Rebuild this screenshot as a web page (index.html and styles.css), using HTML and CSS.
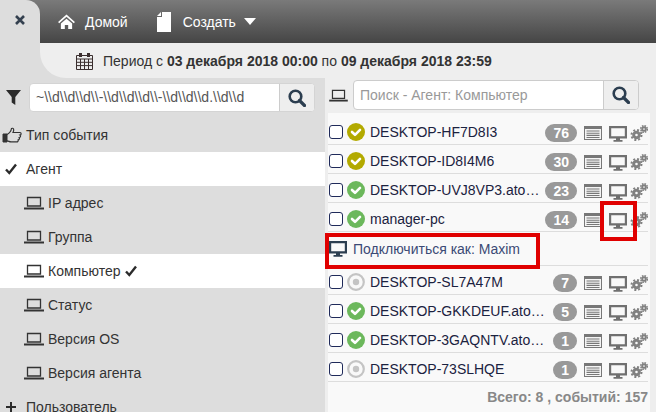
FILE: index.html
```html
<!DOCTYPE html>
<html lang="ru">
<head>
<meta charset="utf-8">
<title>Агенты</title>
<link rel="stylesheet" href="styles.css">
</head>
<body>
<svg class="defs" width="0" height="0">
  <symbol id="laptop" viewBox="0 0 20 14"><path d="M3.500 1.500h13v8.500h-13z" fill="none" stroke="currentColor" stroke-width="1.300"/><path d="M0 12.500h20" stroke="currentColor" stroke-width="2"/></symbol>
  <symbol id="monitor" viewBox="0 0 18 16"><path d="M1.100 1.100h15.800v10.300H1.100z" fill="none" stroke="currentColor" stroke-width="2.200"/><path d="M7 12h4v2h2.500v1.800h-9V14H7z" fill="currentColor"/></symbol>
  <symbol id="list" viewBox="0 0 18 14"><path d="M0 0h18v14H0z" fill="currentColor"/><path d="M1 3h16v10H1z" fill="#f4f4f4"/><path d="M2.500 5h13M2.500 7.200h13M2.500 9.400h13M2.500 11.500h13" stroke="currentColor" stroke-width="1.100"/></symbol>
  <symbol id="gears" viewBox="0 0 18 16"><g fill="none" stroke="currentColor"><circle cx="6.500" cy="10" r="2.800" stroke-width="3"/><circle cx="6.500" cy="10" r="5" stroke-width="2" stroke-dasharray="2 1.930"/><circle cx="14" cy="4" r="1.800" stroke-width="1.900"/><circle cx="14" cy="4" r="3.300" stroke-width="1.500" stroke-dasharray="1.600 1"/></g></symbol>
  <symbol id="search" viewBox="0 0 18 18"><circle cx="7.500" cy="7.500" r="5.800" fill="none" stroke="currentColor" stroke-width="2.600"/><path d="M11.500 11.500l5 5" stroke="currentColor" stroke-width="3.200" stroke-linecap="round"/></symbol>
  <symbol id="ok" viewBox="0 0 18 18"><circle cx="9" cy="9" r="9" fill="currentColor"/><path d="M5 9l3 2.800 5-5" fill="none" stroke="#fff" stroke-width="2.600" stroke-linecap="round" stroke-linejoin="round"/></symbol>
  <symbol id="idle" viewBox="0 0 18 18"><circle cx="9" cy="9" r="7.800" fill="none" stroke="currentColor" stroke-width="2.200"/><circle cx="9" cy="9" r="3.200" fill="currentColor"/></symbol>
  <symbol id="tick" viewBox="0 0 12 12"><path d="M1 6.500l3.300 3.500L11 1.500" fill="none" stroke="currentColor" stroke-width="2.400"/></symbol>
</svg>

<div class="app">
  <header class="topbar">
    <div class="close-tab"><svg class="close-x" viewBox="0 0 10 10"><path d="M1 1l8 8M9 1l-8 8" stroke="#34404f" stroke-width="2.600"/></svg></div>
    <nav class="nav">
      <a class="nav-item">
        <svg class="nav-home" viewBox="0 0 18 16"><path d="M9 0.500L0 8.600l1.200 1.300L9 3l7.800 6.900L18 8.600zM3 10.200L9 5l6 5.200V16h-4.200v-4.400H7.200V16H3z" fill="#fff"/></svg>
        Домой
      </a>
      <a class="nav-item nav-create">
        <svg class="nav-file" viewBox="0 0 14 20"><path d="M5 0h9v20H0V5h5z" fill="#fff"/><path d="M4 0v4H0z" fill="#fff"/></svg>
        Создать
        <span class="caret"></span>
      </a>
    </nav>
  </header>

  <div class="period-row">
    <div class="period">
      <svg class="cal" viewBox="0 0 17 18"><path d="M.5 3.500h16v14H.5zM.5 7h16M.5 10.300h16M.5 13.600h16M4.500 7v10.500M8.500 7v10.500M12.500 7v10.500" fill="none" stroke="#3a2e2e" stroke-width="1"/><path d="M3 1h3v4H3zM11 1h3v4h-3z" fill="#3a2e2e"/></svg>
      <span>Период с <b>03 декабря 2018 00:00</b> по <b>09 декабря 2018 23:59</b></span>
    </div>
  </div>

  <main class="columns">
    <aside class="side">
      <div class="filter">
        <svg class="funnel" viewBox="0 0 15 15"><path d="M0 0h15L9.300 7v8L5.700 12.500V7z" fill="#2b2b2b"/></svg>
        <div class="searchbox">
          <div class="field">~\\d\\d\\d\\-\\d\\d\\d\\-\\d\\d\\d.\\d\\d</div>
          <div class="search-btn"><svg class="i-search"><use href="#search"/></svg></div>
        </div>
      </div>
      <ul class="menu">
        <li class="item"><svg class="thumb" viewBox="0 0 20 16"><path d="M1 7h4v8H1z" fill="#333" stroke="#333"/><path d="M5 7.500c2 -1 4 -3 4.500 -6 2 -1 3 1 1.500 4h7c1.500 0 1.500 2.500 0 2.500 1 1 .5 2.500 -.8 2.500 .6 1 0 2.400 -1 2.400 .2 1 -.5 2 -1.500 2H9c-2 0 -2 -1 -4 -1" fill="none" stroke="#333" stroke-width="1.200"/></svg><span>Тип события</span></li>
        <li class="item active"><svg class="mark"><use href="#tick"/></svg><span>Агент</span></li>
        <li class="item sub"><svg class="i-laptop"><use href="#laptop"/></svg><span>IP адрес</span></li>
        <li class="item sub"><svg class="i-laptop"><use href="#laptop"/></svg><span>Группа</span></li>
        <li class="item sub active"><svg class="i-laptop"><use href="#laptop"/></svg><span>Компьютер</span><svg class="after"><use href="#tick"/></svg></li>
        <li class="item sub"><svg class="i-laptop"><use href="#laptop"/></svg><span>Статус</span></li>
        <li class="item sub"><svg class="i-laptop"><use href="#laptop"/></svg><span>Версия OS</span></li>
        <li class="item sub"><svg class="i-laptop"><use href="#laptop"/></svg><span>Версия агента</span></li>
        <li class="item"><svg class="mark" viewBox="0 0 12 12"><path d="M6 1v10M1 6h10" stroke="#2b2b2b" stroke-width="2"/></svg><span>Пользователь</span></li>
      </ul>
    </aside>

    <section class="agents">
      <div class="agent-search">
        <svg class="i-laptop"><use href="#laptop"/></svg>
        <div class="searchbox wide">
          <div class="field ph">Поиск - Агент: Компьютер</div>
          <div class="search-btn"><svg class="i-search"><use href="#search"/></svg></div>
        </div>
      </div>
      <div class="list">
        <div class="row"><span class="check"></span><svg class="st olive"><use href="#ok"/></svg><span class="name">DESKTOP-HF7D8I3</span><span class="badge">76</span><svg class="a-list"><use href="#list"/></svg><svg class="a-mon"><use href="#monitor"/></svg><svg class="a-gear"><use href="#gears"/></svg></div>
        <div class="row"><span class="check"></span><svg class="st olive"><use href="#ok"/></svg><span class="name">DESKTOP-ID8I4M6</span><span class="badge">30</span><svg class="a-list"><use href="#list"/></svg><svg class="a-mon"><use href="#monitor"/></svg><svg class="a-gear"><use href="#gears"/></svg></div>
        <div class="row"><span class="check"></span><svg class="st green"><use href="#ok"/></svg><span class="name">DESKTOP-UVJ8VP3.atol.ru</span><span class="badge">23</span><svg class="a-list"><use href="#list"/></svg><svg class="a-mon"><use href="#monitor"/></svg><svg class="a-gear"><use href="#gears"/></svg></div>
        <div class="row"><span class="check"></span><svg class="st green"><use href="#ok"/></svg><span class="name">manager-pc</span><span class="badge">14</span><svg class="a-list"><use href="#list"/></svg><svg class="a-mon"><use href="#monitor"/></svg><svg class="a-gear"><use href="#gears"/></svg></div>
        <div class="connect"><svg class="c-mon"><use href="#monitor"/></svg><span>Подключиться как: Maxim</span></div>
        <div class="row"><span class="check"></span><svg class="st grey"><use href="#idle"/></svg><span class="name">DESKTOP-SL7A47M</span><span class="badge">7</span><svg class="a-list"><use href="#list"/></svg><svg class="a-mon"><use href="#monitor"/></svg><svg class="a-gear"><use href="#gears"/></svg></div>
        <div class="row"><span class="check"></span><svg class="st green"><use href="#ok"/></svg><span class="name">DESKTOP-GKKDEUF.atol.ru</span><span class="badge">5</span><svg class="a-list"><use href="#list"/></svg><svg class="a-mon"><use href="#monitor"/></svg><svg class="a-gear"><use href="#gears"/></svg></div>
        <div class="row"><span class="check"></span><svg class="st green"><use href="#ok"/></svg><span class="name">DESKTOP-3GAQNTV.atol.ru</span><span class="badge">1</span><svg class="a-list"><use href="#list"/></svg><svg class="a-mon"><use href="#monitor"/></svg><svg class="a-gear"><use href="#gears"/></svg></div>
        <div class="row"><span class="check"></span><svg class="st grey"><use href="#idle"/></svg><span class="name">DESKTOP-73SLHQE</span><span class="badge">1</span><svg class="a-list"><use href="#list"/></svg><svg class="a-mon"><use href="#monitor"/></svg><svg class="a-gear"><use href="#gears"/></svg></div>
        <div class="total">Всего: 8 , событий: 157</div>
      </div>
    </section>
  </main>

  <div class="callout callout-mon"></div>
  <div class="callout callout-connect"></div>
</div>
</body>
</html>
```

FILE: styles.css
```css
* { box-sizing: border-box; }
html, body { margin: 0; padding: 0; }
body { font-family: "Liberation Sans", Arial, sans-serif; font-size: 14px; color: #333; background: #eee; }
.defs { position: absolute; }
.app { position: relative; width: 656px; height: 412px; overflow: hidden; }

.topbar { display: flex; height: 43px; background: linear-gradient(#7a7a7a, #454545); }
.close-tab { width: 40px; background: #ddd; border-top-right-radius: 14px; display: flex; align-items: center; justify-content: center; padding-bottom: 3px; }
.close-x { width: 10px; height: 10px; }
.nav { display: flex; align-items: center; color: #fff; padding-left: 18px; }
.nav-item { display: flex; align-items: center; }
.nav-home { width: 17px; height: 15px; margin-right: 10px; }
.nav-create { margin-left: 29px; }
.nav-file { width: 14px; height: 20px; margin-right: 12px; }
.caret { margin-left: 8px; border-left: 6px solid transparent; border-right: 6px solid transparent; border-top: 7px solid #fff; }

.period-row { height: 35px; padding-left: 40px; background: #ddd; }
.period { height: 100%; display: flex; align-items: center; padding-left: 36px; background: #eee; border-bottom-left-radius: 26px; }
.cal { width: 17px; height: 18px; margin-right: 10px; flex: none; }

.columns { display: flex; height: 334px; }
.side { width: 325px; background: #ddd; }
.filter { display: flex; align-items: center; height: 40px; padding: 0 0 1px 6px; }
.funnel { width: 15px; height: 15px; margin-right: 8px; flex: none; }
.searchbox { display: flex; width: 286px; height: 29px; border: 1px solid #d4d4d4; border-radius: 4px; background: #fff; overflow: hidden; }
.searchbox.wide { height: 30px; border-color: #ccc; }
.field { flex: 1; padding: 0 0 0 6px; line-height: 27px; white-space: nowrap; overflow: hidden; color: #555; }
.field.ph { color: #999; line-height: 28px; }
.search-btn { width: 35px; background: #eee; border-left: 1px solid #ccc; display: flex; align-items: center; justify-content: center; color: #2c3e50; }
.i-search { width: 18px; height: 18px; }

.menu { list-style: none; margin: 0; padding: 0; }
.item { display: flex; align-items: center; height: 34px; padding-left: 26px; color: #333; position: relative; }
.item.active { background: #fff; }
.item.sub { padding-left: 24px; }
.i-laptop { width: 20px; height: 14px; margin-right: 4px; color: #333; flex: none; }
.thumb { position: absolute; left: 2px; top: 9px; width: 20px; height: 16px; }
.mark { position: absolute; left: 5px; top: 11px; width: 12px; height: 12px; color: #2b2b2b; }
.after { margin-left: 5px; width: 12px; height: 12px; color: #2b2b2b; }

.agents { flex: 1; min-width: 0; padding-left: 3px; }
.agent-search { display: flex; align-items: center; height: 35px; padding: 0 0 1px 1px; }
.agent-search .i-laptop { margin-right: 5px; width: 19px; height: 13px; }
.list { width: 322px; background: #f9f9f9; padding: 3px 2px 0 0; height: 299px; }
.row { display: flex; align-items: center; height: 29px; border-bottom: 1px solid #ddd; padding: 3px 0 0 1px; }
.check { width: 14px; height: 14px; border: 1px solid #1f2a5a; border-radius: 3px; background: #fff; flex: none; margin-right: 4px; }
.st { width: 18px; height: 18px; flex: none; margin-right: 5px; }
.olive { color: #b3aa00; }
.green { color: #6cb85c; }
.grey { color: #c4c4c4; }
.name { flex: 1; min-width: 0; margin-right: 6px; white-space: nowrap; overflow: hidden; text-overflow: ellipsis; color: #1b2240; }
.badge { padding: 0 8px; height: 18px; line-height: 18px; border-radius: 9px; background: #999; color: #fff; font-size: 14px; font-weight: bold; text-align: center; flex: none; margin-top: 3px; }
.a-list { width: 18px; height: 14px; margin: 2px 0 0 7px; color: #777; flex: none; }
.a-mon { width: 18px; height: 16px; margin: 4px 0 0 7px; color: #707070; flex: none; }
.a-gear { width: 18px; height: 16px; margin: 2px 0 0 3px; color: #808080; flex: none; }
.connect { display: flex; align-items: center; height: 34px; border-bottom: 1px solid #ddd; padding-left: 1px; color: #3b4a75; }
.c-mon { width: 18px; height: 16px; margin-right: 6px; color: #2c3e50; }
.total { height: 30px; line-height: 30px; text-align: right; font-weight: bold; color: #888; }

.callout { position: absolute; border: 4px solid #e00000; }
.callout-mon { left: 600px; top: 201px; width: 37px; height: 40px; }
.callout-connect { left: 325px; top: 233px; width: 215px; height: 36px; }
```
